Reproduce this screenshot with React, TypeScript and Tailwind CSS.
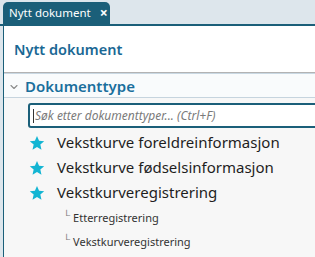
import React from 'react';
import { ChevronDown } from 'lucide-react';

const font = { fontFamily: '"Noto Sans", "Open Sans", sans-serif' };

const Star = () => (
    <svg viewBox="0 0 24 24" className="w-[16px] h-[16px] shrink-0">
        <path d="M12 1.5l3.1 7.1 7.7.7-5.8 5.1 1.7 7.6L12 18l-6.7 4 1.7-7.6L1.2 9.3l7.7-.7z" fill="#13b5d3" />
    </svg>
);

const items = ['Vekstkurve foreldreinformasjon', 'Vekstkurve fødselsinformasjon', 'Vekstkurveregistrering'];
const subItems = ['Etterregistrering', 'Vekstkurveregistrering'];

export default function App() {
    return (
        <div className="w-[315px] h-[257px] overflow-hidden bg-[#dde6ec] flex flex-col" style={font}>
            {/* Tab bar */}
            <div className="h-[24px] shrink-0 flex items-end pl-[3px]">
                <div className="h-[22px] w-[107px] bg-[#1b5f79] rounded-t-[5px] flex items-center pl-[6px] gap-[9px] text-white whitespace-nowrap">
                    <span className="text-[11.5px] leading-none">Nytt dokument</span>
                    <span className="text-[14px] font-bold leading-none">×</span>
                </div>
            </div>
            <div className="h-[2px] shrink-0 bg-[#1b5f79]" />

            {/* Panel */}
            <div className="flex-1 ml-[3px] border-l border-[#1b5f79] bg-white flex flex-col">
                <div className="h-[46px] shrink-0 flex items-center pl-[10px] pt-[1px]">
                    <h1 className="text-[14.5px] font-semibold text-[#1a6894] leading-none">Nytt dokument</h1>
                </div>
                <div className="h-px bg-[#b3b3b3]" />
                <div className="h-px bg-[#c9d8e3]" />
                <div className="flex-1 bg-[#f7f7f7] flex flex-col">
                    <div className="h-[24px] shrink-0 flex items-center bg-[#f9fbfc] border-b border-[#c6d4de] pl-[4px] gap-[5px] pt-[2px]">
                        <ChevronDown className="w-[12px] h-[12px] text-[#8a8a8a]" strokeWidth={2.2} />
                        <span className="text-[15px] font-semibold text-[#1a6f9c] leading-none">Dokumenttype</span>
                    </div>
                    <div className="pl-[24px] pt-[5px]">
                        <div className="h-[25px] w-[300px] border-2 border-[#1b5f79] rounded-[3px] bg-white flex items-center pl-[3px]">
                            <span className="w-px h-[14px] bg-[#333] mr-[1px]" />
                            <span className="text-[12px] italic text-[#7a7a7a] leading-none">Søk etter dokumenttyper... (Ctrl+F)</span>
                        </div>
                    </div>
                    <div className="flex flex-col pl-[25px] pt-[2px]">
                        {items.map((t) => (
                            <div key={t} className="h-[25px] flex items-center gap-[12px]">
                                <Star />
                                <span className="text-[15px] text-[#1e1e1e] leading-none">{t}</span>
                            </div>
                        ))}
                        {subItems.map((t) => (
                            <div key={t} className="h-[24px] flex items-center pl-[34px] gap-[3px] text-[#333]">
                                <span className="text-[10px] leading-none text-[#777] -mt-[4px]">└</span>
                                <span className="text-[11px] leading-none">{t}</span>
                            </div>
                        ))}
                        <div className="h-[25px] flex items-center">
                            <Star />
                        </div>
                    </div>
                </div>
            </div>
        </div>
    );
}
